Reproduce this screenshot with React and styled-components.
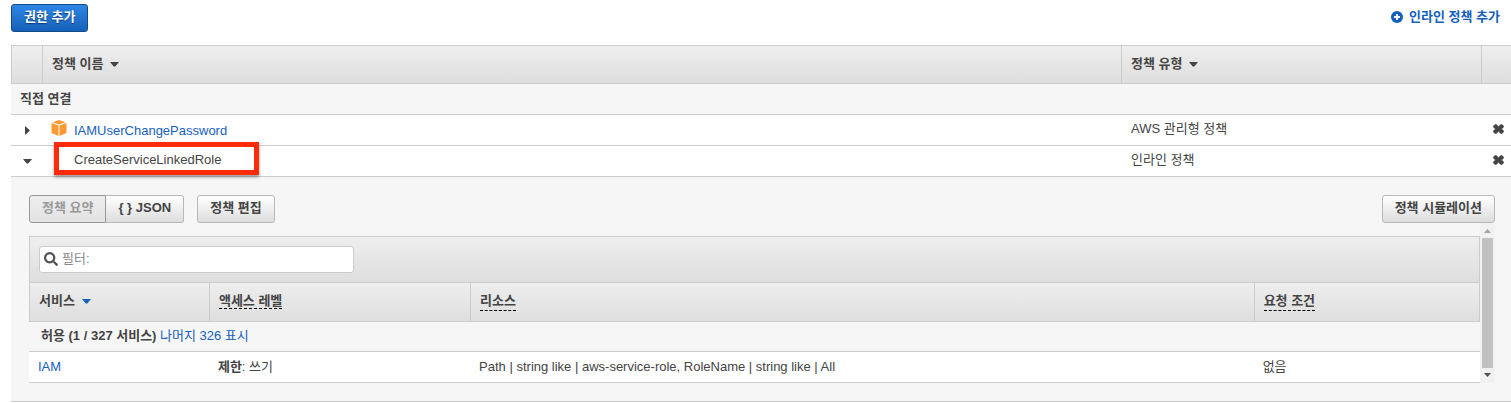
import { createGlobalStyle, styled } from "styled-components";
import { FaSearch } from "react-icons/fa";

const COLORS = {
    text: "#444",
    blue: "#1560bd",
    border: "#ccc",
    pale: "#f6f6f6",
};

const policies = [
    { name: "IAMUserChangePassword", type: "AWS 관리형 정책", managed: true, open: false },
    { name: "CreateServiceLinkedRole", type: "인라인 정책", managed: false, open: true },
];

const Caret = ({ color = COLORS.text }) => (
    <CaretSvg width="9" height="5" viewBox="0 0 9 5" aria-hidden="true">
        <path d="M0 0h9L5.5 4.2q-1 .8-2 0z" fill={color} />
    </CaretSvg>
);

const Cube = () => (
    <svg width="16" height="16" viewBox="0 0 16 16" aria-hidden="true">
        <path d="M8 0l6.5 2.2L8 4.600 1.500 2.200z" fill="#f93" />
        <path d="M.5 3l7 2.500V16l-7-3z" fill="#f93" />
        <path d="M15.500 3l-7 2.500V16l7-3z" fill="#f93" />
    </svg>
);

const Cross = () => (
    <svg width="11" height="10" viewBox="0 0 11 10" aria-hidden="true">
        <path
            d="M.5 2L2 .5h1.300L5.500 2.700 7.700.5H9L10.500 2v1.200L8.500 5l2 1.800V8L9 9.500H7.700L5.500 7.300 3.300 9.500H2L.5 8V6.800L2.500 5l-2-1.800z"
            fill={COLORS.text}
            stroke={COLORS.text}
            strokeWidth=".6"
            strokeLinejoin="round"
        />
    </svg>
);

const PolicyRow = ({ policy }) => (
    <tr>
        <Cell $icon>
            <IconButton aria-label={policy.open ? "접기" : "펼치기"} aria-expanded={policy.open}>
                {policy.open ? <Caret /> : (
                    <svg width="9" height="9" viewBox="0 0 9 9" aria-hidden="true">
                        <path d="M2 0v9L6.500 5q.5-.5 0-1z" fill={COLORS.text} />
                    </svg>
                )}
            </IconButton>
        </Cell>
        <Cell>
            <PolicyName $managed={policy.managed}>
                <IconSlot>{policy.managed && <Cube />}</IconSlot>
                {policy.managed ? <TextLink href="#policy">{policy.name}</TextLink> : (
                    <Marked>
                        {policy.name}
                        <Highlight />
                    </Marked>
                )}
            </PolicyName>
        </Cell>
        <Cell>{policy.type}</Cell>
        <Cell $remove>
            <IconButton aria-label="제거"><Cross /></IconButton>
        </Cell>
    </tr>
);

const PolicyDetail = () => (
    <Detail>
        <Toolbar>
            <ButtonGroup>
                <Button $pressed>정책 요약</Button>
                <Button>{"{ } JSON"}</Button>
            </ButtonGroup>
            <Button>정책 편집</Button>
            <Spacer />
            <Button>정책 시뮬레이션</Button>
        </Toolbar>
        <ScrollArea>
            <Summary>
                <FilterBar>
                    <SearchBox>
                        <FaSearch size={14} color="#555" aria-hidden="true" />
                        <input type="text" aria-label="필터" placeholder="필터:" />
                    </SearchBox>
                </FilterBar>
                <SummaryTable>
                    <colgroup>
                        <ServiceCol />
                        <AccessCol />
                        <ResourceCol />
                        <col />
                    </colgroup>
                    <thead>
                        <tr>
                            <HeadCell>서비스<Caret color={COLORS.blue} /></HeadCell>
                            <HeadCell><Hint>액세스 레벨</Hint></HeadCell>
                            <HeadCell><Hint $loose>리소스</Hint></HeadCell>
                            <HeadCell><Hint $loose>요청 조건</Hint></HeadCell>
                        </tr>
                    </thead>
                    <tbody>
                        <tr>
                            <GroupCell colSpan={4} $inner>
                                허용 (1 / 327 서비스) <TextLink href="#rest">나머지 326 표시</TextLink>
                            </GroupCell>
                        </tr>
                        <tr>
                            <Cell><TextLink href="#iam">IAM</TextLink></Cell>
                            <Cell><b>제한</b>: 쓰기</Cell>
                            <Cell>Path | string like | aws-service-role, RoleName | string like | All</Cell>
                            <Cell>없음</Cell>
                        </tr>
                    </tbody>
                </SummaryTable>
            </Summary>
            <ScrollBar aria-hidden="true">
                <svg width="7" height="4" viewBox="0 0 7 4"><path d="M0 4L3.500 0 7 4z" fill="#a3a3a3" /></svg>
                <Thumb />
                <svg width="7" height="4" viewBox="0 0 7 4"><path d="M0 0l3.500 4L7 0z" fill="#505050" /></svg>
            </ScrollBar>
        </ScrollArea>
    </Detail>
);

const App = () => (
    <>
        <GlobalStyle />
        <Page>
            <TopBar>
                <Button $primary>권한 추가</Button>
                <AddLink href="#inline">
                    <svg width="12" height="12" viewBox="0 0 12 12" aria-hidden="true">
                        <circle cx="6" cy="6" r="6" fill={COLORS.blue} />
                        <path d="M6 3v6M3 6h6" stroke="#fff" strokeWidth="2" />
                    </svg>
                    인라인 정책 추가
                </AddLink>
            </TopBar>
            <PolicyTable>
                <colgroup>
                    <ToggleCol />
                    <col />
                    <TypeCol />
                    <RemoveCol />
                </colgroup>
                <thead>
                    <tr>
                        <HeadCell />
                        <HeadCell>정책 이름<Caret /></HeadCell>
                        <HeadCell>정책 유형<Caret /></HeadCell>
                        <HeadCell />
                    </tr>
                </thead>
                <tbody>
                    <tr><GroupCell colSpan={4}>직접 연결</GroupCell></tr>
                    {policies.map(policy => <PolicyRow key={policy.name} policy={policy} />)}
                    <tr><DetailCell colSpan={4}><PolicyDetail /></DetailCell></tr>
                </tbody>
            </PolicyTable>
        </Page>
    </>
);

const GlobalStyle = createGlobalStyle`
* {
    box-sizing: border-box;
}
body {
    margin: 0;
    background: white;
}
body, button, input {
    font: 13px/18px "Liberation Sans", "Noto Sans CJK KR", sans-serif;
    color: ${COLORS.text};
}
`
const Page = styled.main`
padding: 4px 0 0 11px;
`
const TopBar = styled.div`
display: flex;
justify-content: space-between;
align-items: flex-start;
padding-right: 11px;
margin-bottom: 13px;
`
const TextLink = styled.a`
color: ${COLORS.blue};
text-decoration: none;
`
const AddLink = styled(TextLink)`
display: flex;
align-items: center;
gap: 6px;
padding-top: 4px;
font-weight: bold;
`
const Button = styled.button`
height: 28px;
padding: 0 12px 2px;
font-weight: bold;
white-space: nowrap;
border-radius: 3px;
border: 1px solid ${props => props.$primary ? "#0f4a8a" : "#b8b8b8"};
color: ${props => props.$primary ? "white" : props.$pressed ? "#999" : COLORS.text};
background: ${props => props.$primary ? "linear-gradient(#2f86e5, #1560b8)" : props.$pressed ? "linear-gradient(#eee, #e2e2e2)" : "linear-gradient(#fff, #ddd)"};
text-shadow: ${props => props.$primary ? "0 1px 1px #0a3a70" : "none"};
`
const ButtonGroup = styled.div`
display: flex;
margin-right: 13px;

    & > :first-child {
        border-color: #999;
        border-radius: 3px 0 0 3px;
    }

    & > :last-child {
        border-left: 0;
        border-radius: 0 3px 3px 0;
    }
`
const PolicyTable = styled.table`
width: 100%;
table-layout: fixed;
border-spacing: 0;
`
const SummaryTable = styled(PolicyTable)``
const ToggleCol = styled.col`
width: 31px;
`
const TypeCol = styled.col`
width: 24%;
`
const RemoveCol = styled.col`
width: 30px;
`
const ServiceCol = styled.col`
width: 12.4%;
`
const AccessCol = styled.col`
width: 18%;
`
const ResourceCol = styled.col`
width: 54%;
`
const HeadCell = styled.th`
height: 39px;
padding: 0 9px 2px;
text-align: left;
white-space: nowrap;
border: 1px solid ${COLORS.border};
border-right-width: 0;
background: linear-gradient(#eee, #dedede);

    ${SummaryTable} & {
        height: 40px;
        padding-bottom: 3px;
    }

    ${SummaryTable} &:last-child {
        border-right-width: 1px;
    }
`
const Hint = styled.span`
padding-bottom: ${props => props.$loose ? "2px" : "0"};
border-bottom: 1px dashed black;
`
const CaretSvg = styled.svg`
vertical-align: middle;

    ${HeadCell} & {
        margin-left: 7px;
    }
`
const Cell = styled.td`
height: 31px;
padding: ${props => props.$icon ? "0 0 0 2px" : props.$remove ? "0 4px 4px 0" : "5px 9px 7px"};
text-align: ${props => props.$icon ? "center" : props.$remove ? "right" : "left"};
vertical-align: ${props => props.$icon || props.$remove ? "middle" : "top"};
background: white;
border-bottom: 1px solid ${COLORS.border};

    &:nth-child(3) {
        padding-left: 10px;
    }

    ${SummaryTable} && {
        padding: 6px 9px;
    }
`
const GroupCell = styled.td`
height: ${props => props.$inner ? "30px" : "31px"};
padding: ${props => props.$inner ? "0 12px 2px" : "0 9px"};
font-weight: bold;
background: ${COLORS.pale};
border-bottom: 1px solid ${COLORS.border};

    ${TextLink} {
        font-weight: normal;
    }
`
const IconButton = styled.button`
display: inline-flex;
padding: 3px;
border: 0;
background: none;
vertical-align: middle;
`
const PolicyName = styled.div`
display: flex;
gap: 7px;

    ${TextLink} {
        padding-top: 2px;
        margin-bottom: -2px;
    }
`
const IconSlot = styled.span`
width: 16px;
height: 16px;
`
const Marked = styled.span`
position: relative;
`
const Highlight = styled.span`
position: absolute;
top: -9px;
left: -20px;
width: 205px;
height: 33px;
border: 5px solid #ff2b06;
box-shadow: 0 2px 3px rgba(0, 0, 0, 0.4);
`
const DetailCell = styled.td`
padding: 0;
background: ${COLORS.pale};
border-bottom: 1px solid ${COLORS.border};
`
const Detail = styled.section`
padding: 18px 16px 18px 18px;
`
const Toolbar = styled.div`
display: flex;
`
const Spacer = styled.div`
flex: 1;
`
const ScrollArea = styled.div`
display: flex;
`
const Summary = styled.div`
flex: 1;
padding-top: 13px;
`
const FilterBar = styled.div`
padding: 9px;
border: 1px solid ${COLORS.border};
border-bottom: 0;
background: linear-gradient(#eee, #dedede);
`
const SearchBox = styled.label`
display: flex;
align-items: center;
gap: 4px;
width: 315px;
height: 27px;
padding: 0 4px 2px;
background: white;
border: 1px solid ${COLORS.border};
border-radius: 3px;

    input {
        flex: 1;
        padding: 0;
        border: 0;
        outline: 0;
        background: none;
    }

    input::placeholder {
        color: #888;
    }
`
const ScrollBar = styled.div`
display: flex;
flex-direction: column;
align-items: center;
gap: 5px;
width: 15px;
padding: 6px 0;
background: #f1f1f1;
`
const Thumb = styled.div`
flex: 1;
width: 11px;
background: #c1c1c1;
`
export default App;
